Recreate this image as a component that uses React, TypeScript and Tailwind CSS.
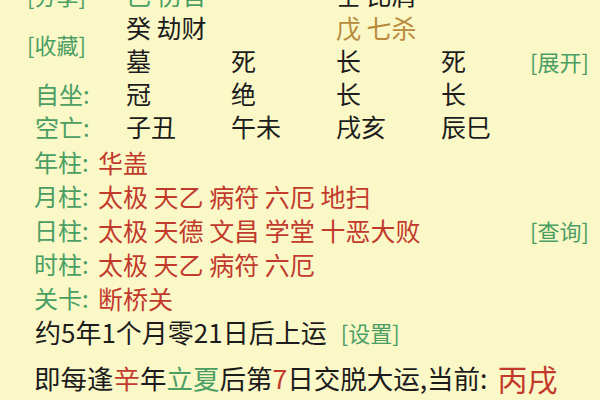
import React from "react";

const G = "text-[#4a9e63]";
const R = "text-[#c23a2c]";
const K = "text-[#1c1c1c]";
const Y = "text-[#b78a3c]";

function Row({ label, children, right }: { label: string; children: React.ReactNode; right?: string }) {
  return (
    <div className="flex h-[34px] items-center pl-[34px]">
      <span className={`${G} w-[64px] shrink-0 text-[24px]`}>{label}</span>
      <span className={`${R} flex-1 whitespace-nowrap`}>{children}</span>
      {right && <span className={`${G} w-[70px] text-[22px] shrink-0`}>{right}</span>}
    </div>
  );
}

export default function App() {
  return (
    <div
      className="w-[600px] h-[400px] overflow-hidden bg-[#fbf8c8] text-[25px] leading-none"
      style={{ fontFamily: '"Noto Sans CJK SC", "Noto Sans", sans-serif' }}
    >
      <div className="-mt-[22px] flex flex-col">
        <div className="grid grid-cols-[126px_105px_105px_105px_89px_70px] auto-rows-[33px] items-center">
          <div className={`${G} pl-[27px] text-[22px]`}>[分享]</div>
          <div className={`${G} whitespace-nowrap`}>己 伤官</div>
          <div />
          <div className={`${K} whitespace-nowrap`}>壬 比肩</div>
          <div />
          <div />

          <div className={`${G} pl-[27px] text-[22px] row-span-2 self-center`}>[收藏]</div>
          <div className={`${K} whitespace-nowrap`}>癸 劫财</div>
          <div />
          <div className={`${Y} whitespace-nowrap`}>戊 七杀</div>
          <div />
          <div />

          <div className={K}>墓</div>
          <div className={K}>死</div>
          <div className={K}>长</div>
          <div className={K}>死</div>
          <div className={`${G} text-[22px] whitespace-nowrap`}>[展开]</div>

          <div className={`${G} pl-[35px] text-[24px]`}>自坐:</div>
          <div className={K}>冠</div>
          <div className={K}>绝</div>
          <div className={K}>长</div>
          <div className={K}>长</div>
          <div />

          <div className={`${G} pl-[35px] text-[24px]`}>空亡:</div>
          <div className={K}>子丑</div>
          <div className={K}>午未</div>
          <div className={K}>戌亥</div>
          <div className={K}>辰巳</div>
          <div />
        </div>

        <div className="mt-[2px]" />
        <Row label="年柱:">华盖</Row>
        <Row label="月柱:">太极 天乙 病符 六厄 地扫</Row>
        <Row label="日柱:" right="[查询]">太极 天德 文昌 学堂 十恶大败</Row>
        <Row label="时柱:">太极 天乙 病符 六厄</Row>
        <Row label="关卡:">断桥关</Row>

        <div className={`flex h-[34px] items-center pl-[35px] text-[26px] whitespace-nowrap ${K}`}>
          <span>约5年1个月零21日后上运</span>
          <span className={`${G} ml-[14px] text-[22px]`}>[设置]</span>
        </div>

        <div className={`mt-[10px] flex h-[38px] items-center pl-[34px] text-[26.5px] whitespace-nowrap ${K}`}>
          <span>即每逢</span>
          <span className={R}>辛</span>
          <span>年</span>
          <span className={G}>立夏</span>
          <span>后第</span>
          <span className={R}>7</span>
          <span>日交脱大运,当前: </span>
          <span className={`${R} text-[30px] ml-[10px]`}>丙戌</span>
        </div>
      </div>
    </div>
  );
}
